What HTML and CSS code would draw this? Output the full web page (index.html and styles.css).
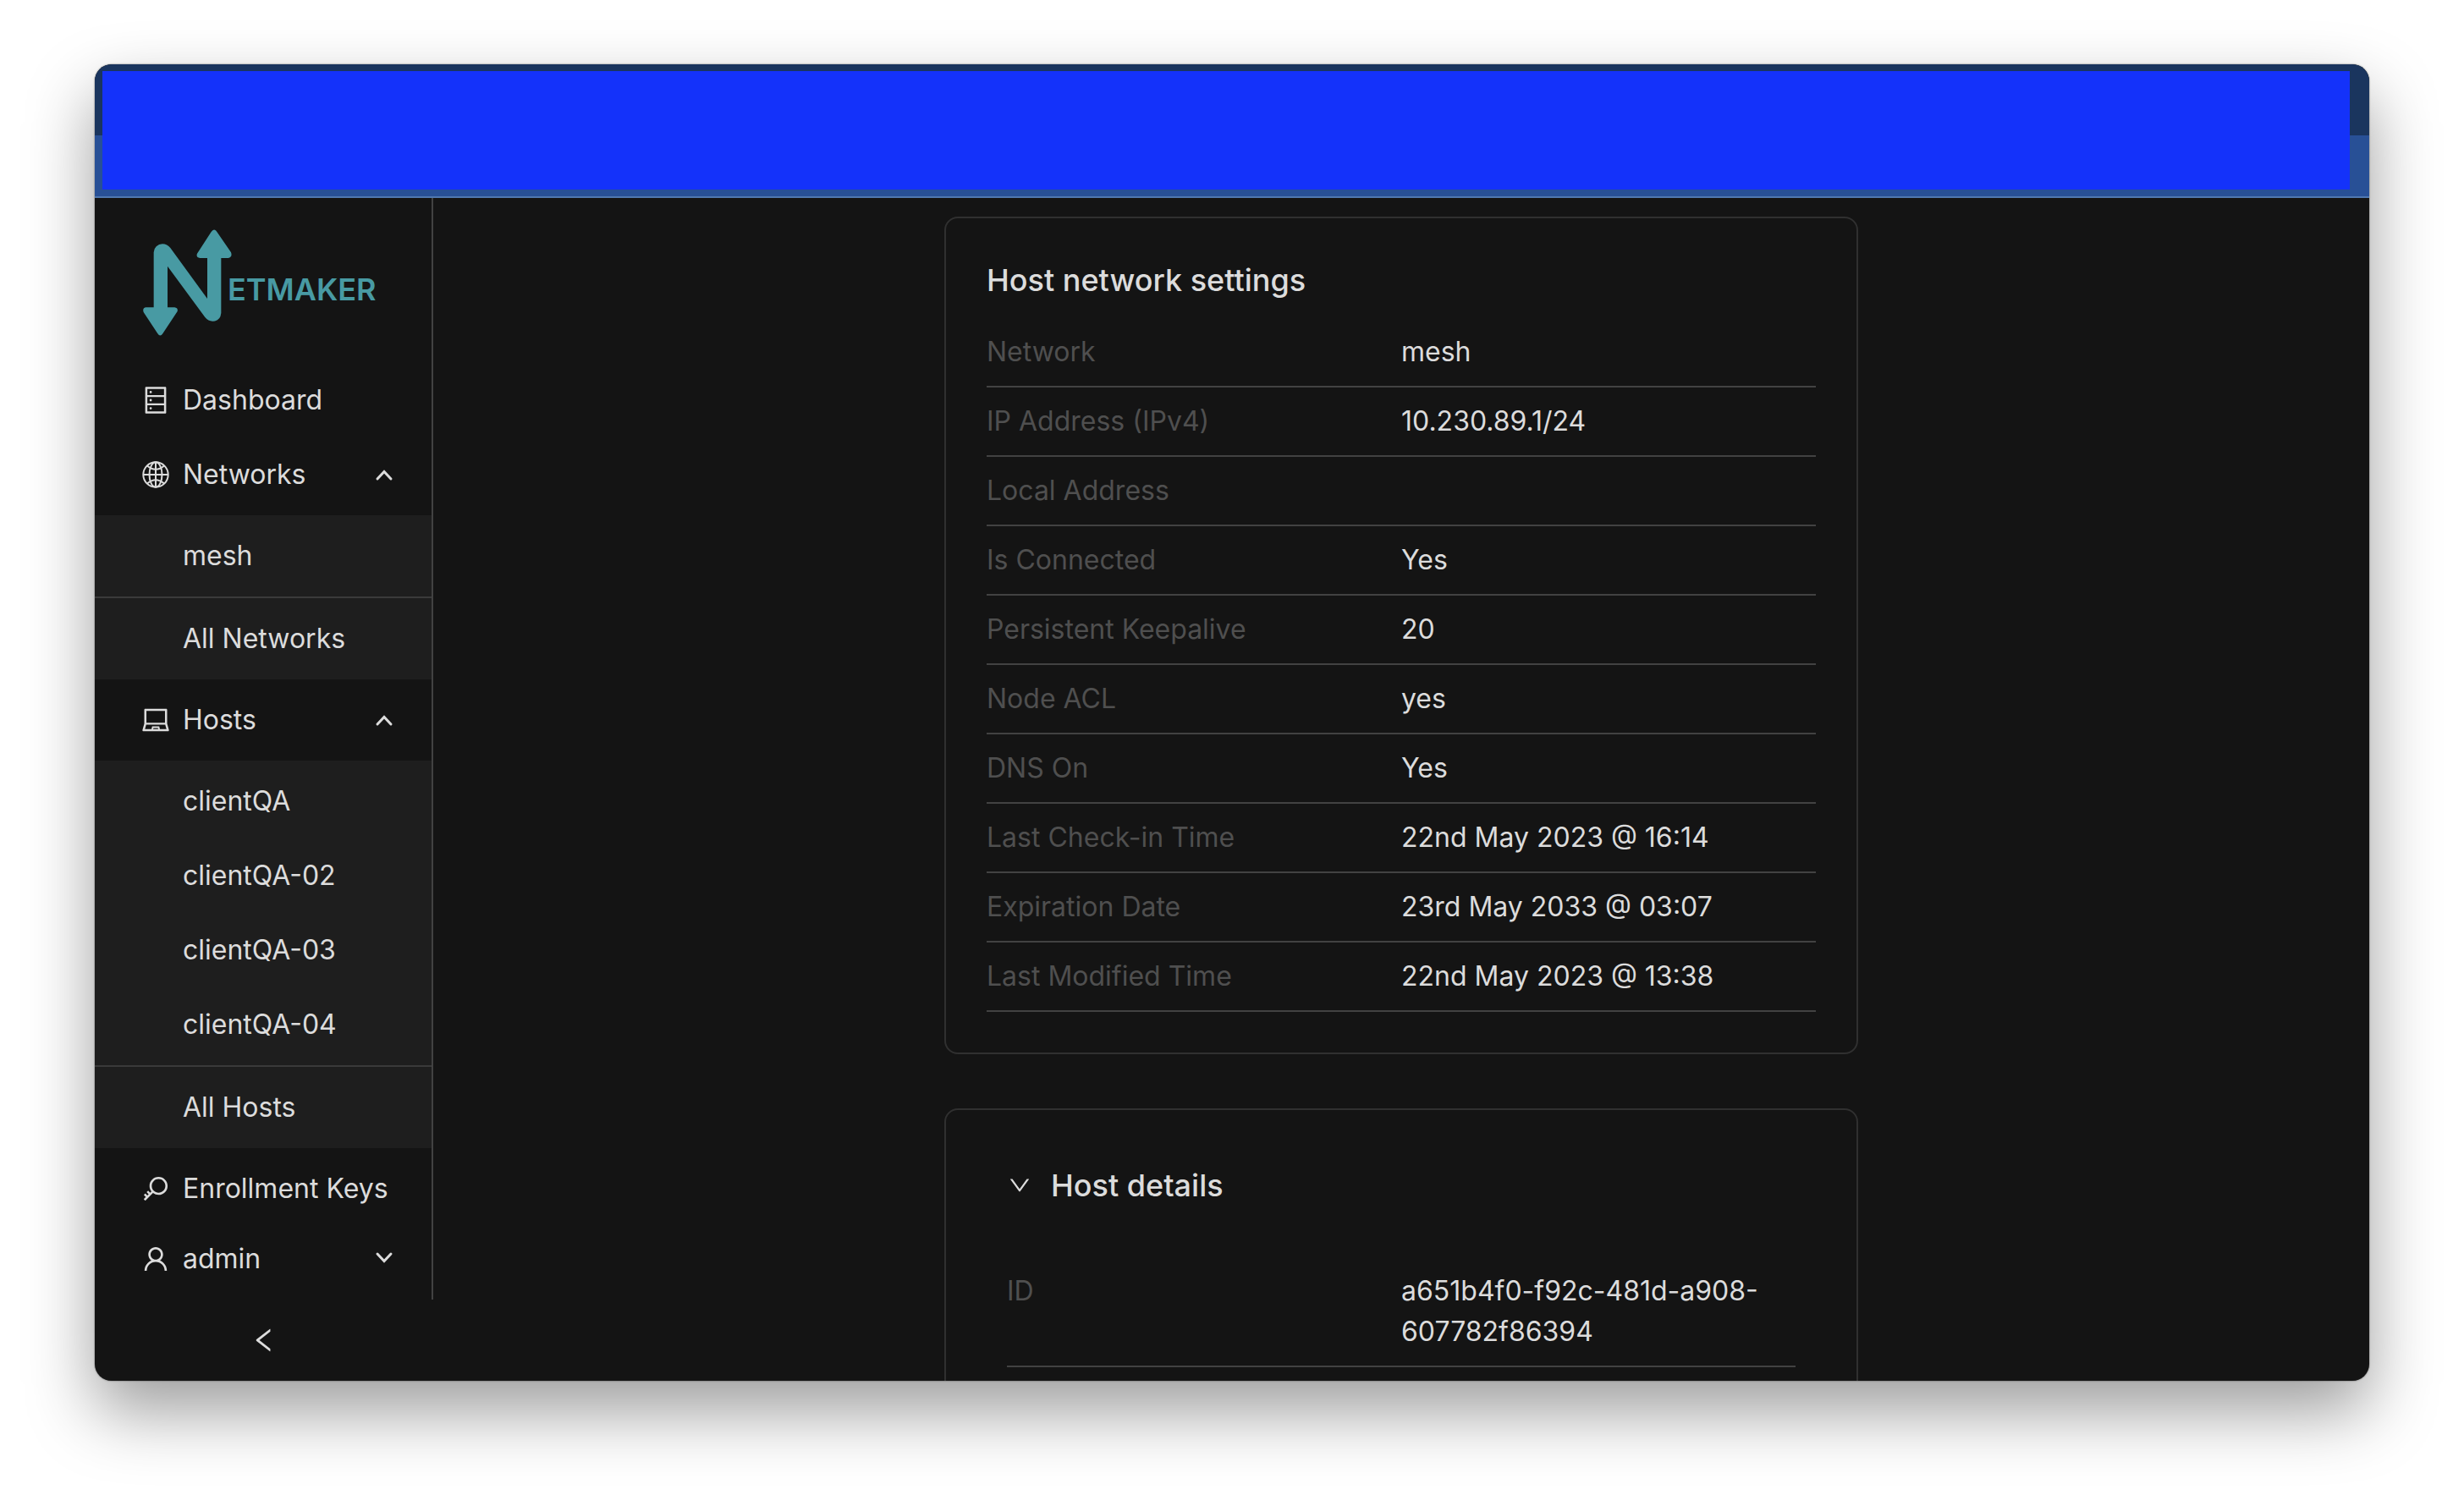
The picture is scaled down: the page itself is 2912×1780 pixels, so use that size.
FILE: index.html
```html
<!DOCTYPE html>
<html lang="en">
<head>
<meta charset="utf-8">
<meta name="viewport" content="width=device-width, initial-scale=1">
<title>Netmaker</title>
<link rel="stylesheet" href="styles.css">
</head>
<body>
<div class="window">
  <header class="titlebar"><div class="titlebar-cover"></div></header>
  <div class="app">
    <aside class="sidebar">
      <nav class="sidebar-body" aria-label="Main">
        <a class="logo" href="#">
          <svg class="logo-mark" viewBox="206 632 300 376" aria-hidden="true"><path d="M244 908V713A31 30 0 0 1 275 683Q292 683 303 697L434 877V733H408Q393 731 398 717L448 640Q458 625 468 640L518 713Q524 730 508 733H483V928Q480 957 453 957Q437 957 426 943L293 762V908H318Q331 910 328 922L276 1001Q267 1014 258 1001L208 925Q203 909 217 908Z"/></svg>
          <span class="logo-text">ETMAKER</span>
        </a>
        <a class="item" href="#"><svg class="icon" viewBox="0 0 1024 1024" aria-hidden="true"><path d="M832 64H192c-17.700 0-32 14.300-32 32v832c0 17.700 14.300 32 32 32h640c17.700 0 32-14.300 32-32V96c0-17.700-14.300-32-32-32zm-600 72h560v208H232V136zm560 480H232V408h560v208zm0 272H232V680h560v208zM304 240a40 40 0 1080 0 40 40 0 10-80 0zm0 272a40 40 0 1080 0 40 40 0 10-80 0zm0 272a40 40 0 1080 0 40 40 0 10-80 0z"/></svg>Dashboard</a>
        <button class="item" type="button" aria-expanded="true"><svg class="icon line" viewBox="0 0 36 36" aria-hidden="true"><circle cx="18" cy="18" r="14.700"/><path d="M18 3V33M3 18H33"/><ellipse cx="18" cy="18" rx="7.500" ry="14.700"/><path d="M8 7.500Q18 16 28 7.500M8 28.500Q18 20 28 28.500"/></svg>Networks<svg class="arrow" viewBox="0 0 24 24" aria-hidden="true"><path d="M4 17L12 8.500L20 17"/></svg></button>
        <div class="submenu">
          <a class="item" href="#">mesh</a>
          <hr class="divider">
          <a class="item" href="#">All Networks</a>
        </div>
        <button class="item" type="button" aria-expanded="true"><svg class="icon" viewBox="0 0 1024 1024" aria-hidden="true"><path d="M956.900 845.100L896.400 632V168c0-17.700-14.300-32-32-32h-704c-17.700 0-32 14.300-32 32v464L67.900 845.100C60.400 866 75.800 888 98 888h828.800c22.200 0 37.600-22 30.100-42.900zM200.400 208h624v395h-624V208zm228.300 608l8.100-37h150.300l8.100 37H428.700zm224 0l-19.100-86.800c-.8-3.700-4.100-6.300-7.800-6.300H398.200c-3.800 0-7 2.600-7.800 6.300L371.300 816H151l42.300-149h638.200l42.300 149H652.700z"/></svg>Hosts<svg class="arrow" viewBox="0 0 24 24" aria-hidden="true"><path d="M4 17L12 8.500L20 17"/></svg></button>
        <div class="submenu">
          <a class="item" href="#">clientQA</a>
          <a class="item" href="#">clientQA-02</a>
          <a class="item" href="#">clientQA-03</a>
          <a class="item" href="#">clientQA-04</a>
          <hr class="divider">
          <a class="item" href="#">All Hosts</a>
        </div>
        <a class="item item-last" href="#"><svg class="icon" viewBox="0 0 1024 1024" aria-hidden="true"><path d="M608 112c-167.900 0-304 136.100-304 304 0 70.300 23.900 135 63.900 186.500l-41.100 41.100-62.300-62.300a8.150 8.150 0 00-11.400 0l-39.800 39.800a8.150 8.150 0 000 11.400l62.300 62.300-44.900 44.900-62.300-62.300a8.150 8.150 0 00-11.400 0l-39.800 39.800a8.150 8.150 0 000 11.400l62.300 62.300-65.300 65.300a8.030 8.030 0 000 11.300l42.300 42.300c3.100 3.100 8.200 3.100 11.300 0l253.600-253.600A304.060 304.060 0 00608 720c167.900 0 304-136.100 304-304S775.900 112 608 112zm161.200 465.200C726.200 620.300 668.900 644 608 644c-60.900 0-118.200-23.700-161.200-66.800-43.100-43-66.800-100.300-66.800-161.200 0-60.900 23.700-118.200 66.800-161.200 43-43.100 100.300-66.800 161.200-66.800 60.900 0 118.200 23.700 161.200 66.800 43.100 43 66.800 100.300 66.800 161.200 0 60.900-23.700 118.200-66.800 161.200z"/></svg>Enrollment Keys</a>
        <button class="item account" type="button" aria-expanded="false"><svg class="icon" viewBox="0 0 1024 1024" aria-hidden="true"><path d="M858.500 763.600a374 374 0 00-80.600-119.500 375.630 375.630 0 00-119.500-80.600c-.4-.2-.8-.3-1.200-.5C719.500 518 760 444.700 760 362c0-137-111-248-248-248S264 225 264 362c0 82.700 40.500 156 102.800 201.100-.4.200-.8.300-1.200.5-44.800 18.900-85 46-119.500 80.600a375.630 375.630 0 00-80.600 119.500A371.700 371.700 0 00136 901.800a8 8 0 008 8.200h60c4.400 0 7.900-3.500 8-7.800 2-77.200 33-149.500 87.800-204.300 56.700-56.700 132-87.900 212.200-87.900s155.500 31.200 212.200 87.900C779 752.700 810 825 812 902.200c.1 4.400 3.600 7.800 8 7.800h60a8 8 0 008-8.200c-1-47.800-10.900-94.300-29.500-138.200zM512 534c-45.900 0-89.100-17.900-121.600-50.400S340 407.900 340 362c0-45.900 17.900-89.100 50.400-121.600S466.100 190 512 190s89.100 17.900 121.600 50.400S684 316.100 684 362c0 45.900-17.900 89.100-50.400 121.600S557.900 534 512 534z"/></svg>admin<svg class="arrow" viewBox="0 0 24 24" aria-hidden="true"><path d="M4 6L12 14.500L20 6"/></svg></button>
      </nav>
      <button class="collapse" type="button" aria-label="Collapse sidebar"><svg class="icon" viewBox="0 0 1024 1024" aria-hidden="true"><path d="M724 218.300V141c0-6.700-7.700-10.400-12.900-6.300L260.300 486.800a31.860 31.860 0 000 50.300l450.800 352.100c5.300 4.100 12.900.4 12.900-6.300v-77.300c0-4.900-2.300-9.600-6.100-12.600l-360-281 360-281.100c3.800-3 6.100-7.700 6.100-12.600z"/></svg></button>
    </aside>
    <main class="content">
      <section class="card">
        <h2 class="heading card-title">Host network settings</h2>
        <dl class="rows">
          <div class="row"><dt>Network</dt><dd>mesh</dd></div>
          <div class="row"><dt>IP Address (IPv4)</dt><dd>10.230.89.1/24</dd></div>
          <div class="row"><dt>Local Address</dt><dd></dd></div>
          <div class="row"><dt>Is Connected</dt><dd>Yes</dd></div>
          <div class="row"><dt>Persistent Keepalive</dt><dd>20</dd></div>
          <div class="row"><dt>Node ACL</dt><dd>yes</dd></div>
          <div class="row"><dt>DNS On</dt><dd>Yes</dd></div>
          <div class="row"><dt>Last Check-in Time</dt><dd>22nd May 2023 @ 16:14</dd></div>
          <div class="row"><dt>Expiration Date</dt><dd>23rd May 2033 @ 03:07</dd></div>
          <div class="row"><dt>Last Modified Time</dt><dd>22nd May 2023 @ 13:38</dd></div>
        </dl>
      </section>
      <section class="card">
        <h2 class="heading"><button class="panel-toggle" type="button" aria-expanded="true"><svg class="panel-icon" viewBox="0 0 1024 1024" aria-hidden="true"><path d="M884 256h-75c-5.100 0-9.900 2.500-12.900 6.600L512 654.200 227.900 262.600c-3-4.100-7.800-6.600-12.900-6.600h-75c-6.500 0-10.300 7.400-6.500 12.700l352.600 486.100c12.800 17.600 39 17.600 51.700 0l352.600-486.100c3.900-5.300.1-12.700-6.400-12.700z"/></svg>Host details</button></h2>
        <dl class="rows panel-body">
          <div class="row"><dt>ID</dt><dd>a651b4f0-f92c-481d-a908-607782f86394</dd></div>
        </dl>
      </section>
    </main>
  </div>
</div>
</body>
</html>
```
FILE: styles.css
```css
:root {
  --bg: #141414;
  --bg-raised: #1e1e1e;
  --text: #dcdcdc;
  --text-dim: #4f4f4f;
  --line: #424242;
  --card-line: #303030;
  --brand: #489aa3;
}

* { box-sizing: border-box; }

body {
  margin: 0;
  padding: 76px 112px 148px;
  background: #fff;
  color: var(--text);
  font-family: Inter, "Liberation Sans", sans-serif;
  font-size: 32px;
  line-height: 48px;
}

a { color: inherit; text-decoration: none; }

button {
  border: 0;
  background: none;
  color: inherit;
  font: inherit;
  text-align: left;
  cursor: pointer;
}

svg { flex: none; fill: currentColor; }

.window {
  display: flex;
  flex-direction: column;
  height: calc(100vh - 224px);
  overflow: hidden;
  border-radius: 20px;
  background: var(--bg);
  box-shadow: 0 0 2px rgba(0, 0, 0, .6), 0 36px 80px rgba(0, 0, 0, .39);
}

.titlebar {
  flex: none;
  height: 158px;
  padding: 8px 23px 8px 9px;
  border-bottom: 2px solid #5078b0;
  background: linear-gradient(#1a355e 84px, #285096 84px);
}

.titlebar-cover {
  height: 140px;
  background: #1432fa;
}

.app {
  display: flex;
  flex: 1;
  min-height: 0;
}

/* Sidebar */
.sidebar {
  display: flex;
  flex: none;
  flex-direction: column;
  width: 400px;
}

.sidebar-body {
  display: flex;
  flex: 1;
  flex-direction: column;
  min-height: 0;
  border-right: 2px solid var(--line);
}

.logo {
  display: flex;
  align-items: flex-end;
  padding: 37px 0 36px 57px;
  color: var(--brand);
}

.logo-mark {
  width: 100px;
  height: 126px;
  overflow: visible;
}

.logo-text {
  margin-bottom: 37px;
  font-size: 36px;
  font-weight: 600;
  line-height: 36px;
}

.item {
  display: flex;
  flex: none;
  align-items: center;
  gap: 14px;
  width: 100%;
  height: 80px;
  margin-bottom: 8px;
  padding: 0 44px 0 54px;
}

.item-last {
  margin-bottom: 0;
}

.icon {
  width: 36px;
  height: 36px;
}

.line {
  fill: none;
  stroke: currentColor;
  stroke-width: 2;
}

.arrow {
  width: 24px;
  height: 24px;
  margin-left: auto;
  fill: none;
  stroke: currentColor;
  stroke-width: 3;
  stroke-linecap: round;
}

.submenu {
  margin-bottom: 8px;
  padding: 8px 0;
  background: var(--bg-raised);
}

.submenu .item {
  padding-left: 104px;
}

.submenu .item:last-child {
  margin-bottom: 0;
}

.divider {
  height: 2px;
  margin: 0 0 8px;
  border: 0;
  background: #3a3a3a;
}

.account {
  margin-top: auto;
}

.collapse {
  display: flex;
  flex: none;
  align-items: center;
  justify-content: center;
  height: 96px;
}

/* Main column */
.content {
  display: flex;
  flex: 1;
  flex-direction: column;
  align-items: center;
  gap: 64px;
  padding-top: 22px;
  overflow: hidden;
}

.card {
  flex: none;
  width: 100%;
  max-width: 1080px;
  padding: 48px;
  border: 2px solid var(--card-line);
  border-radius: 16px;
}

.heading {
  margin: 0;
  font-size: 36px;
  font-weight: 500;
  line-height: 50px;
}

.card-title {
  margin-bottom: 20px;
}

.rows { margin: 0; }

.row {
  display: grid;
  grid-template-columns: 1fr 1fr;
  padding: 16px 0;
  border-bottom: 2px solid var(--line);
}

.row dt { color: var(--text-dim); }
.row dd { min-height: 48px; margin: 0; }

.panel-toggle {
  display: flex;
  align-items: center;
  gap: 22px;
  width: 100%;
  padding: 16px 24px;
}

.panel-icon {
  width: 30px;
  height: 30px;
}

.panel-body {
  padding: 44px 24px 24px;
}
```
